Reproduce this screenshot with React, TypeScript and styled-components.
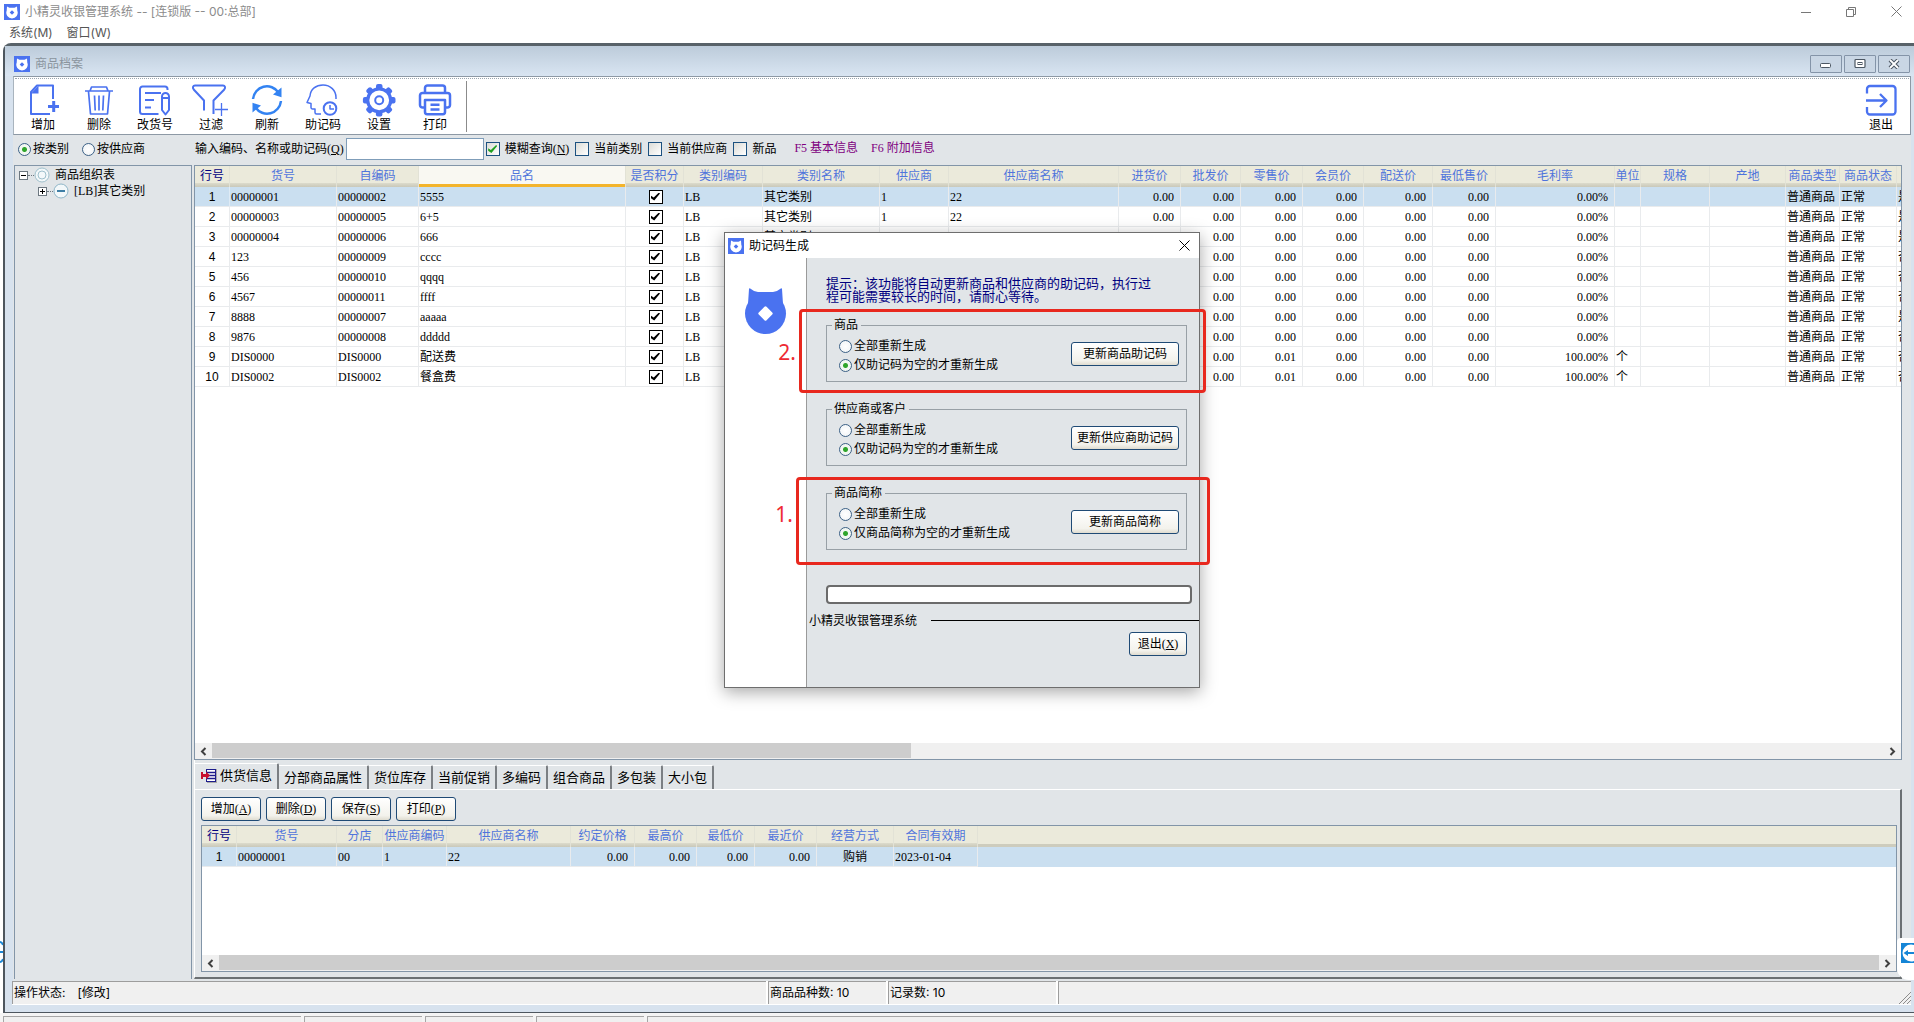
import React from "react";
import styled, { createGlobalStyle, css } from "styled-components";

const SONG = `"Liberation Serif", "Noto Sans CJK SC", serif`;
const HEI = `Inter, "Noto Sans CJK SC", sans-serif`;
const FACE = "#e1e5e8";
const FRAME = "#d7e2ee";
const LINE = "#8295a8";
const BLUE = "#4a72f0";

const GlobalStyle = createGlobalStyle`
  * { box-sizing: border-box; }
  body { margin: 0; background: #fff; overflow: hidden; }
  button, input { font: inherit; color: inherit; margin: 0; }
  button { padding: 0; border: 0; background: none; }
`;

/* ---------- application shell ---------- */

const Shell = styled.div`
  position: relative;
  display: flex;
  flex-direction: column;
  height: 100vh;
  font: 12px/16px ${SONG};
  color: #000;
  background: #fff;
  overflow: hidden;
`;

const AppBar = styled.header`
  display: flex;
  align-items: center;
  height: 23px;
  padding: 0 12px 0 4px;
  font-family: ${HEI};
  color: #8c8c8c;
`;

const AppTitle = styled.span`
  flex: 1;
  margin-left: 5px;
`;

const AppControls = styled.div`
  display: flex;
  gap: 35px;
  height: 20px;
`;

const GlyphButton = styled.button`
  display: flex;
  align-items: center;
  color: #777;
`;

const MenuBar = styled.nav`
  display: flex;
  gap: 14px;
  height: 20px;
  padding: 2px 9px;
  font-family: ${HEI};
  color: #555;
`;

const Mdi = styled.main`
  flex: 1;
  min-height: 0;
  display: flex;
  flex-direction: column;
  margin-left: 3px;
  border: solid #4d565e;
  border-width: 3px 0 1px 2px;
  border-top-color: #586269;
  border-top-left-radius: 8px;
  background: ${FRAME};
`;

const Caption = styled.div`
  display: flex;
  align-items: center;
  height: 30px;
  padding: 6px 4px 0 9px;
  background: linear-gradient(#bccbda, #d9e5f2);
  font-family: ${HEI};
  color: #8a949e;
`;

const CaptionButtons = styled.div`
  display: flex;
  gap: 2px;
`;

const CaptionButton = styled.button`
  display: flex;
  align-items: center;
  justify-content: center;
  width: 32px;
  height: 18px;
  border: 1px solid #8494a8;
  border-radius: 1px;
  background: #c9d6e4;
`;

const Face = styled.div`
  flex: 1;
  min-height: 0;
  display: flex;
  flex-direction: column;
  margin: 0 3px 0 8px;
  background: ${FACE};
`;

/* ---------- toolbar ---------- */

const Toolbar = styled.div`
  display: flex;
  border: 1px solid #8d99a5;
  border-left-color: #a9b4be;
  background: #fff;
  padding: 1px;
`;

const ToolbarInner = styled.div`
  flex: 1;
  display: flex;
  align-items: flex-start;
  border-top: 1px dotted #9aa5af;
  padding-top: 5px;
`;

const ToolButton = styled.button`
  display: flex;
  flex-direction: column;
  align-items: center;
  gap: 1px;
  width: 56px;
  height: 49px;
  line-height: 16px;

  svg {
    display: block;
    overflow: visible;
  }
`;

const ToolSeparator = styled.span`
  width: 1px;
  height: 51px;
  margin: -3px auto 0 3px;
  background: #8b8b8b;
`;

/* ---------- filter row ---------- */

const FilterRow = styled.div`
  display: flex;
  align-items: center;
  height: 30px;
  padding-bottom: 2px;
`;

const ScopeGroup = styled.div`
  display: flex;
  gap: 13px;
  width: 182px;
  padding-left: 5px;
`;

const Choice = styled.label`
  display: flex;
  align-items: center;
  gap: 2px;
  white-space: nowrap;
`;

const Radio = styled.input`
  appearance: none;
  width: 13px;
  height: 13px;
  border: 1px solid #3c6186;
  border-radius: 50%;
  background: radial-gradient(#fff, #eef2f5);

  &:checked {
    background: radial-gradient(circle, #2fa52b 0, #2fa52b 2px, #f2f7f2 3px);
  }
`;

const SearchBox = styled.input`
  width: 138px;
  height: 22px;
  padding: 0 2px;
  border: 1px solid #7f9db9;
  background: #fff;
`;

const CheckGroup = styled.div`
  display: flex;
  gap: 6px;
  margin: 0 18px 0 2px;
`;

const CheckChoice = styled.label`
  display: flex;
  align-items: center;
  gap: 5px;
  white-space: nowrap;
`;

const Tick = styled.input<{ $plain?: boolean }>`
  appearance: none;
  width: 14px;
  height: 14px;
  border: 1px solid ${(p) => (p.$plain ? "#000" : "#1c5180")};
  background: ${(p) => (p.$plain ? "#fff" : "linear-gradient(135deg, #dcdcd7, #fff)")};
  display: inline-grid;
  place-items: center;

  &:checked::before {
    content: "";
    width: 9px;
    height: 8px;
    background: ${(p) => (p.$plain ? "#000" : "#21a121")};
    clip-path: polygon(0 40%, 30% 62%, 88% 0, 100% 14%, 36% 100%, 0 72%);
  }
`;

const Hints = styled.div`
  display: flex;
  gap: 13px;
  padding-bottom: 2px;
  color: #800080;
`;

/* ---------- content ---------- */

const Content = styled.div`
  flex: 1;
  min-height: 0;
  display: flex;
  gap: 2px;
  padding: 0 9px 2px 1px;
`;

const Tree = styled.aside`
  width: 178px;
  border: 1px solid ${LINE};
  border-bottom: 0;
  padding: 1px 0 0 4px;
`;

const TreeRow = styled.div<{ $level: number }>`
  display: flex;
  align-items: center;
  height: 16px;
  padding-left: ${(p) => p.$level * 19}px;
`;

const TreeToggle = styled.button`
  width: 9px;
  height: 9px;
  border: 1px solid #6c7780;
  background: #fff;
  display: grid;
  place-items: center;

  svg {
    display: block;
  }
`;

const TreeDots = styled.span`
  width: 6px;
  border-top: 1px dotted #6c7780;
`;

const TreeLabel = styled.span`
  margin-left: 5px;
`;

const Right = styled.section`
  flex: 1;
  min-width: 0;
  display: flex;
  flex-direction: column;
`;

const GridBox = styled.div<{ $height?: number }>`
  ${(p) => (p.$height ? css`height: ${p.$height}px;` : css`flex: 1; min-height: 0;`)}
  display: flex;
  flex-direction: column;
  border: 1px solid ${LINE};
  background: #fff;
`;

const GridView = styled.div<{ $band?: boolean }>`
  flex: 1;
  min-height: 0;
  overflow: hidden;
  background: ${(p) =>
    p.$band
      ? "linear-gradient(#ebeadb 18px, #cdccbd 18px, #cdccbd 21px, #cadff0 21px, #cadff0 41px, #fff 41px)"
      : "#fff"};
`;

const Table = styled.table`
  table-layout: fixed;
  border-collapse: separate;
  border-spacing: 0;
`;

const Head = styled.th<{ $tone?: "dark" | "active" }>`
  height: 21px;
  padding: 1px 0 2px;
  border-right: 1px solid #e2e2d6;
  font-weight: 400;
  line-height: 16px;
  white-space: nowrap;
  overflow: hidden;
  color: ${(p) => (p.$tone === "dark" ? "#000080" : "#4f74dc")};
  background: ${(p) =>
    p.$tone === "active"
      ? "linear-gradient(#f9f8f2 18px, #f3b42c 18px)"
      : "linear-gradient(#ebeadb 17px, #dcdbcc 17px, #c9c8b9)"};
`;

const Cell = styled.td<{ $align?: string }>`
  height: 20px;
  padding: 0 ${(p) => (p.$align === "right" ? 6 : 1)}px 0 1px;
  border: solid #e9ebed;
  border-width: 0 1px 1px 0;
  text-align: ${(p) => p.$align || "left"};
  line-height: 16px;
  white-space: nowrap;
  overflow: hidden;
`;

const Row = styled.tr<{ $on?: boolean }>`
  background: ${(p) => (p.$on ? "#cadff0" : "#fff")};

  td:first-child {
    font-family: "Liberation Sans", sans-serif;
    text-align: center;
    border-right-color: ${(p) => (p.$on ? "#dfebf5" : "#e9ebed")};
  }
`;

const TickWrap = styled.span`
  display: flex;
  justify-content: center;
  padding-left: 2px;
`;

const Scroll = styled.div`
  display: flex;
  height: 16px;
  background: #f0f0f0;
`;

const ScrollArrow = styled.button`
  width: 17px;
  display: grid;
  place-items: center;
`;

const ScrollTrack = styled.div`
  flex: 1;
  height: 15px;
`;

const ScrollThumb = styled.div`
  height: 15px;
  background: #cdcdcd;
`;

/* ---------- lower tabs ---------- */

const TabBar = styled.div`
  display: flex;
  align-items: flex-end;
  height: 29px;
  padding-top: 3px;
  font-size: 13px;
  border-left: 1px solid #fff;
`;

const Tab = styled.button<{ $on?: boolean }>`
  display: flex;
  align-items: center;
  gap: 3px;
  height: ${(p) => (p.$on ? 26 : 24)}px;
  padding: 0 5px ${(p) => (p.$on ? 2 : 0)}px ${(p) => (p.$on ? 6 : 5)}px;
  border-top: 1px solid #fff;
  border-right: 2px solid #7b7f83;
  border-top-right-radius: 2px;
  white-space: nowrap;
`;

const Page = styled.div`
  border: solid #6b7073;
  border-width: 1px 2px 2px 1px;
  border-top-color: #fff;
  border-left-color: #fff;
  padding: 7px 3px 5px 6px;
`;

const Actions = styled.div`
  display: flex;
  gap: 5px;
  margin-bottom: 4px;
`;

const PushButton = styled.button<{ $width: number }>`
  width: ${(p) => p.$width}px;
  height: 24px;
  border: 1px solid #1f4a75;
  border-radius: 3px;
  background: linear-gradient(#fff, #f3f2ec 80%, #dfdcd0);
  line-height: 16px;
  white-space: nowrap;
`;

/* ---------- status bars ---------- */

const StatusBar = styled.footer`
  display: flex;
  gap: 2px;
  height: 24px;
  margin: 0 3px 7px 7px;
  background: #fff;
  font-family: ${HEI};
`;

const StatusPane = styled.div<{ $width?: number }>`
  ${(p) => (p.$width ? css`width: ${p.$width}px;` : css`flex: 1;`)}
  display: flex;
  gap: 12px;
  height: 23px;
  padding: 3px 1px;
  border: solid #9d9d9d;
  border-width: 1px 0 0 1px;
  background: #f0f0f0;
  white-space: nowrap;
`;

const GripPane = styled(StatusPane)`
  justify-content: flex-end;
  align-items: flex-end;
  padding: 0;
`;

const Strip = styled.div`
  display: flex;
  gap: 3px;
  height: 9px;
  padding: 3px 0 0 3px;
  background: #f4f4f4;
`;

const StripPane = styled.div<{ $width?: number }>`
  ${(p) => (p.$width ? css`width: ${p.$width}px;` : css`flex: 1;`)}
  border: solid #a6a6a6;
  border-width: 1px 0 0 1px;
  background: #f0f0f0;
`;

const Remote = styled.div`
  position: absolute;
  right: 0;
  bottom: 42px;
  width: 17px;
  height: 42px;
  padding: 5px 0 0 4px;
  overflow: hidden;
  background: #fff;
  border-radius: 4px 0 0 12px;
`;

const RemoteLeft = styled.div`
  position: absolute;
  left: 0;
  bottom: 58px;
  width: 3px;
  height: 24px;
  overflow: hidden;
  background: #fff;
`;

/* ---------- dialog ---------- */

const Dialog = styled.div`
  position: absolute;
  left: calc(50% - 233px);
  top: 232px;
  width: 476px;
  border: 1px solid #6e6e6e;
  background: #fff;
  box-shadow: 0 4px 16px rgba(0, 0, 0, 0.35);
`;

const DialogTitle = styled.div`
  display: flex;
  align-items: center;
  height: 25px;
  padding: 0 9px 0 3px;
  font-family: ${HEI};

  svg {
    display: block;
  }
`;

const TitleText = styled.span`
  flex: 1;
  margin-left: 5px;
`;

const DialogBody = styled.div`
  display: flex;
`;

const Side = styled.div`
  width: 82px;
  padding: 30px 0 0 20px;
  border-right: 1px solid #9a9a9a;
`;

const Form = styled.div`
  flex: 1;
  padding: 19px 0 31px;
  background: ${FACE};
`;

const Tip = styled.p`
  width: 330px;
  margin: 0 0 15px 19px;
  font-size: 13px;
  line-height: 13px;
  color: #000080;
`;

const Group = styled.fieldset`
  width: 361px;
  min-width: 0;
  height: 64px;
  margin: 0 0 20px 19px;
  padding: 0;
  border: 1px solid #98a0a6;
`;

const Legend = styled.legend`
  margin-left: 5px;
  padding: 0 3px 0 2px;
  line-height: 14px;
`;

const GroupBody = styled.div`
  display: flex;
  justify-content: space-between;
  align-items: flex-start;
  padding: 6px 7px 0 12px;
`;

const Choices = styled.div`
  display: grid;
  gap: 3px;
`;

const GroupAction = styled.div`
  padding-top: 4px;
`;

const Progress = styled.div`
  width: 366px;
  height: 19px;
  margin: 35px 0 9px 19px;
  border: 2px solid #6b6b6b;
  border-radius: 4px;
  background: #fff;
`;

const Brand = styled.div`
  display: flex;
  align-items: center;
  height: 15px;
  margin: 0 0 4px 2px;

  &::after {
    content: "";
    flex: 1;
    height: 1px;
    margin-left: 14px;
    background: #000;
  }
`;

const DialogFoot = styled.div`
  display: flex;
  justify-content: flex-end;
  padding-right: 12px;
`;

const Frame = styled.div<{ $left: number; $top: number; $width: number; $height: number }>`
  position: absolute;
  left: calc(50% + ${(p) => p.$left}px);
  top: ${(p) => p.$top}px;
  width: ${(p) => p.$width}px;
  height: ${(p) => p.$height}px;
  border: 3px solid #e8281e;
  border-radius: 4px;
  pointer-events: none;
`;

const Step = styled.span<{ $top: number }>`
  position: absolute;
  right: 100%;
  top: ${(p) => p.$top}px;
  margin-right: 6px;
  font: 21px/28px "Noto Sans", sans-serif;
  color: #ee2a33;
`;

/* ---------- drawings ---------- */

const AppIcon = () => (
  <svg width="16" height="16" viewBox="0 0 16 16">
    <rect width="16" height="16" fill={BLUE} />
    <path d="M3 2.500 5.500 3.800h5L13 2.500l.3 4.200a5.700 5.700 0 1 1-10.600 0z" fill="#fff" />
    <path d="m8 6.200 2.300 2.300L8 10.800 5.700 8.500z" fill={BLUE} />
  </svg>
);

const CatLogo = () => (
  <svg width="42" height="46" viewBox="0 0 42 46">
    <path d="M3 16 4 1q.2-1 1.200-.6Q9 3.600 13 4h15q4-.4 7.800-3.600Q37 0 37 1l1 15z" fill={BLUE} />
    <circle cx="20.500" cy="25.500" r="20.500" fill={BLUE} />
    <rect x="15" y="20" width="11" height="11" rx="1.500" fill="#fff" transform="rotate(45 20.500 25.500)" />
  </svg>
);

const Ico = ({ children, w = 2 }: { children: React.ReactNode; w?: number }) => (
  <svg width="36" height="32" viewBox="-1 0 36 32" fill="none" stroke={BLUE} strokeWidth={w} strokeLinejoin="round">
    {children}
  </svg>
);

const AddIcon = () => (
  <Ico>
    <path d="M27 15V1.500H11L5 8v22h19" />
    <path d="M5 9.500 12.500 1.500v8z" fill={BLUE} stroke="none" />
    <path d="M27.700 17v11M22 22.500h11" strokeWidth="3" />
  </Ico>
);
const TrashIcon = () => (
  <Ico w={1.700}>
    <path d="M3 7h28M8 7l1.500-4h15L26 7M6.500 7.500l2 22.500h17l2-22.500M12.500 11.500l.7 15M17 11.500v15M21.500 11.500l-.7 15" />
  </Ico>
);
const EditIcon = () => (
  <Ico>
    <path d="M29.500 6V5A2.500 2.500 0 0 0 27 2.500H4.500A2.500 2.500 0 0 0 2 5v22.500A2.500 2.500 0 0 0 4.500 30H20.500M7 9h16M7 16h9M7 23.500h6" />
    <path d="M24 12.500a3.500 3.500 0 0 1 7 0V26l-3.500 4.500L24 26zM24 14h7" />
  </Ico>
);
const FilterIcon = () => (
  <Ico>
    <path d="M10 26.500V16.500L-.3 5.500C-1.800 3.500-1 1.500 1 1.500h28c2 0 2.800 2 1.300 4L19.500 16.500V30" />
    <path d="M27.500 19v13M21 25.500h13" strokeWidth="1.300" />
  </Ico>
);
const RefreshIcon = () => (
  <svg width="36" height="32" viewBox="-1 0 36 32" fill="none" stroke="#3383f2" strokeWidth="2.500">
    <path d="M3 15A14 14 0 0 1 28.500 8.500M31 17A14 14 0 0 1 5.500 23.500" />
    <path d="M31.500 3.500v9.700l-8.500-2.700zM2.500 28.500v-9.700l8.500 2.700z" fill="#3383f2" stroke="none" />
  </svg>
);
const HeadIcon = () => (
  <Ico w={1.500}>
    <path d="M15 30h-4.500a1.500 1.500 0 0 1-1.500-1.500V25H6.500A1.500 1.500 0 0 1 5 23.500V19.500L1 18.500 4 12C4.500 5 10 1 17 1c7.500 0 13 5.500 13 12.500V15" />
    <circle cx="24" cy="24.500" r="6.300" strokeWidth="2" />
    <path d="M24 21v4h4" />
  </Ico>
);
const GearIcon = () => (
  <Ico>
    {[0, 45, 90, 135, 180, 225, 270, 315].map((a) => (
      <rect key={a} x="14" y="0" width="6.500" height="6" rx="2" fill={BLUE} stroke="none" transform={`rotate(${a} 17.200 16.300)`} />
    ))}
    <circle cx="17.200" cy="16.300" r="11.500" strokeWidth="3.200" fill="#fff" />
    <circle cx="17.200" cy="16.300" r="4" />
  </Ico>
);
const PrintIcon = () => (
  <Ico w={2.500}>
    <path d="M7 9V4a2.500 2.500 0 0 1 2.500-2.500h15A2.500 2.500 0 0 1 27 4v5M7 23.500H4.500A2.500 2.500 0 0 1 2 21V11.500A2.500 2.500 0 0 1 4.500 9h25a2.500 2.500 0 0 1 2.500 2.500V21a2.500 2.500 0 0 1-2.500 2.500H27" />
    <path d="M7 16h20v12a2.200 2.200 0 0 1-2.200 2.200H9.200A2.200 2.200 0 0 1 7 28zM12.500 20.700h9M12.500 25.500h9" />
  </Ico>
);
const ExitIcon = () => (
  <Ico w={2.300}>
    <path d="M3 9.500V5a3 3 0 0 1 3-3h22.500a3 3 0 0 1 3 3v22.500a3 3 0 0 1-3 3H6a3 3 0 0 1-3-3V23" />
    <path d="M2 16.500h20M16 10l6.500 6.500L16 23" />
  </Ico>
);

const Chevron = ({ back }: { back?: boolean }) => (
  <svg width="7" height="9" viewBox="0 0 7 9" fill="none" stroke="#404040" strokeWidth="2">
    <path d={back ? "M5.500 1 2 4.500 5.500 8" : "M1.500 1 5 4.500 1.500 8"} />
  </svg>
);

const TabIcon = () => (
  <svg width="16" height="14" viewBox="0 0 16 14">
    <rect x="6" y="0" width="10" height="14" fill="#a9a9a9" />
    <rect x="5.500" y=".5" width="9" height="12" fill="#fff" stroke="#1c1c8c" />
    <path d="M6 3.500h8M6 6.500h8M6 9.500h8" stroke="#1c1c8c" strokeWidth="1.500" />
    <path d="M0 3v7h2V8h3v2.500L9 6.500 5 2.500V5H2V3z" fill="#c8102e" />
  </svg>
);

/* ---------- data ---------- */

const tools: [string, () => React.ReactElement][] = [
  ["增加", AddIcon],
  ["删除", TrashIcon],
  ["改货号", EditIcon],
  ["过滤", FilterIcon],
  ["刷新", RefreshIcon],
  ["助记码", HeadIcon],
  ["设置", GearIcon],
  ["打印", PrintIcon],
];

type Col = { name: string; width: number; align?: string; tone?: "dark" | "active" };

const goodsCols: Col[] = [
  { name: "行号", width: 35, tone: "dark" },
  { name: "货号", width: 107 },
  { name: "自编码", width: 82 },
  { name: "品名", width: 207, tone: "active" },
  { name: "是否积分", width: 58, align: "center" },
  { name: "类别编码", width: 79 },
  { name: "类别名称", width: 117 },
  { name: "供应商", width: 69 },
  { name: "供应商名称", width: 170 },
  { name: "进货价", width: 62, align: "right" },
  { name: "批发价", width: 60, align: "right" },
  { name: "零售价", width: 62, align: "right" },
  { name: "会员价", width: 61, align: "right" },
  { name: "配送价", width: 69, align: "right" },
  { name: "最低售价", width: 63, align: "right" },
  { name: "毛利率", width: 119, align: "right" },
  { name: "单位", width: 26 },
  { name: "规格", width: 69 },
  { name: "产地", width: 76 },
  { name: "商品类型", width: 54 },
  { name: "商品状态", width: 57 },
  { name: "", width: 60 },
];

const goods: [string, string, string, string][] = [
  ["00000001", "00000002", "5555", "是"],
  ["00000003", "00000005", "6+5", "是"],
  ["00000004", "00000006", "666", "是"],
  ["123", "00000009", "cccc", "否"],
  ["456", "00000010", "qqqq", "否"],
  ["4567", "00000011", "ffff", "否"],
  ["8888", "00000007", "aaaaa", "是"],
  ["9876", "00000008", "ddddd", "否"],
  ["DIS0000", "DIS0000", "配送费", "否"],
  ["DIS0002", "DIS0002", "餐盒费", "否"],
];

const goodsRows = goods.map(([code, own, name, flag], i) => {
  const fee = i > 7;
  return [
    String(i + 1), code, own, name, "✓", "LB", "其它类别", "1", "22",
    "0.00", "0.00", fee ? "0.01" : "0.00", "0.00", "0.00", "0.00",
    fee ? "100.00%" : "0.00%", fee ? "个" : "", "", "", "普通商品", "正常", flag,
  ];
});

const supplyCols: Col[] = [
  { name: "行号", width: 35, tone: "dark" },
  { name: "货号", width: 100 },
  { name: "分店", width: 46 },
  { name: "供应商编码", width: 64 },
  { name: "供应商名称", width: 124 },
  { name: "约定价格", width: 64, align: "right" },
  { name: "最高价", width: 62, align: "right" },
  { name: "最低价", width: 58, align: "right" },
  { name: "最近价", width: 62, align: "right" },
  { name: "经营方式", width: 77, align: "center" },
  { name: "合同有效期", width: 84 },
];

const supplyRows = [["1", "00000001", "00", "1", "22", "0.00", "0.00", "0.00", "0.00", "购销", "2023-01-04"]];

const tabs = ["供货信息", "分部商品属性", "货位库存", "当前促销", "多编码", "组合商品", "多包装", "大小包"];

function DataTable({ cols, rows }: { cols: Col[]; rows: string[][] }) {
  const total = cols.reduce((sum, c) => sum + c.width, 0);
  return (
    <Table style={{ width: total }}>
      <colgroup>
        {cols.map((c, i) => (
          <col key={i} style={{ width: c.width }} />
        ))}
      </colgroup>
      <thead>
        <tr>
          {cols.map((c, i) => (
            <Head key={i} $tone={c.tone}>{c.name}</Head>
          ))}
        </tr>
      </thead>
      <tbody>
        {rows.map((row, r) => (
          <Row key={r} $on={r === 0}>
            {row.map((v, i) => (
              <Cell key={i} $align={cols[i].align}>
                {v === "✓" ? (
                  <TickWrap>
                    <Tick type="checkbox" $plain defaultChecked aria-label="是否积分" />
                  </TickWrap>
                ) : (
                  v
                )}
              </Cell>
            ))}
          </Row>
        ))}
      </tbody>
    </Table>
  );
}

function ScrollBar({ size }: { size: string }) {
  return (
    <Scroll>
      <ScrollArrow aria-label="向左滚动"><Chevron back /></ScrollArrow>
      <ScrollTrack>
        <ScrollThumb style={{ width: size }} />
      </ScrollTrack>
      <ScrollArrow aria-label="向右滚动"><Chevron /></ScrollArrow>
    </Scroll>
  );
}

function OptionGroup({ title, partial, action }: { title: string; partial: string; action: string }) {
  return (
    <Group>
      <Legend>{title}</Legend>
      <GroupBody>
        <Choices>
          <Choice><Radio type="radio" name={title} />全部重新生成</Choice>
          <Choice><Radio type="radio" name={title} defaultChecked />{partial}</Choice>
        </Choices>
        <GroupAction>
          <PushButton $width={108}>{action}</PushButton>
        </GroupAction>
      </GroupBody>
    </Group>
  );
}

export default function App() {
  return (
    <>
      <GlobalStyle />
      <Shell>
        <AppBar>
          <AppIcon />
          <AppTitle>小精灵收银管理系统 -- [连锁版 -- 00:总部]</AppTitle>
          <AppControls>
            <GlyphButton aria-label="最小化">
              <svg width="10" height="10" stroke="currentColor"><path d="M0 5.500h10" /></svg>
            </GlyphButton>
            <GlyphButton aria-label="还原">
              <svg width="10" height="10" fill="none" stroke="currentColor"><path d="M.5 2.500h7v7h-7zM2.500 2.500v-2h7v7h-2" /></svg>
            </GlyphButton>
            <GlyphButton aria-label="关闭">
              <svg width="11" height="11" stroke="currentColor"><path d="m.5.5 10 10m0-10-10 10" /></svg>
            </GlyphButton>
          </AppControls>
        </AppBar>
        <MenuBar>
          <span>系统(M)</span>
          <span>窗口(W)</span>
        </MenuBar>

        <Mdi>
          <Caption>
            <AppIcon />
            <TitleText>商品档案</TitleText>
            <CaptionButtons>
              <CaptionButton aria-label="最小化窗口">
                <svg width="12" height="12" fill="#fff" stroke="#4c5763"><rect x=".5" y="5.500" width="10" height="4" rx="1" /></svg>
              </CaptionButton>
              <CaptionButton aria-label="还原窗口">
                <svg width="12" height="10" fill="#fff" stroke="#4c5763"><rect x="1" y=".5" width="10" height="8" rx="1" strokeWidth="1.200" /><rect x="4" y="3.500" width="4" height="2" /></svg>
              </CaptionButton>
              <CaptionButton aria-label="关闭窗口">
                <svg width="12" height="10" viewBox="0 0 12 10"><path d="m2 1 8 8m0-8-8 8" stroke="#4c5763" strokeWidth="4" /><path d="m2 1 8 8m0-8-8 8" stroke="#fff" strokeWidth="1.800" /></svg>
              </CaptionButton>
            </CaptionButtons>
          </Caption>

          <Face>
            <Toolbar>
              <ToolbarInner>
                {tools.map(([name, Icon]) => (
                  <ToolButton key={name}><Icon />{name}</ToolButton>
                ))}
                <ToolSeparator />
                <ToolButton><ExitIcon />退出</ToolButton>
              </ToolbarInner>
            </Toolbar>

            <FilterRow>
              <ScopeGroup>
                <Choice><Radio type="radio" name="scope" defaultChecked />按类别</Choice>
                <Choice><Radio type="radio" name="scope" />按供应商</Choice>
              </ScopeGroup>
              <Choice>
                <span>输入编码、名称或助记码(<u>Q</u>)</span>
                <SearchBox type="text" />
              </Choice>
              <CheckGroup>
                <CheckChoice><Tick type="checkbox" defaultChecked /><span>模糊查询(<u>N</u>)</span></CheckChoice>
                <CheckChoice><Tick type="checkbox" />当前类别</CheckChoice>
                <CheckChoice><Tick type="checkbox" />当前供应商</CheckChoice>
                <CheckChoice><Tick type="checkbox" />新品</CheckChoice>
              </CheckGroup>
              <Hints>
                <span>F5 基本信息</span>
                <span>F6 附加信息</span>
              </Hints>
            </FilterRow>

            <Content>
              <Tree>
                <TreeRow $level={0}>
                  <TreeToggle aria-label="收起"><svg width="5" height="5" stroke="#000"><path d="M0 2.500h5" /></svg></TreeToggle>
                  <TreeDots />
                  <svg width="16" height="16" fill="none" stroke="#9fc0cc"><circle cx="8" cy="8" r="7" fill="#f3f8fa" /><circle cx="8" cy="8" r="4" /></svg>
                  <TreeLabel>商品组织表</TreeLabel>
                </TreeRow>
                <TreeRow $level={1}>
                  <TreeToggle aria-label="展开"><svg width="5" height="5" stroke="#000"><path d="M0 2.500h5M2.500 0v5" /></svg></TreeToggle>
                  <TreeDots />
                  <svg width="16" height="16" fill="none" stroke="#8fb6c8"><circle cx="8" cy="8" r="7" fill="#f3f8fa" /><path d="M4 8h8" stroke="#3f7fa6" strokeWidth="2" /></svg>
                  <TreeLabel>[LB]其它类别</TreeLabel>
                </TreeRow>
              </Tree>

              <Right>
                <GridBox>
                  <GridView><DataTable cols={goodsCols} rows={goodsRows} /></GridView>
                  <ScrollBar size="41.800%" />
                </GridBox>

                <TabBar>
                  {tabs.map((t, i) => (
                    <Tab key={t} $on={i === 0}>{i === 0 && <TabIcon />}{t}</Tab>
                  ))}
                </TabBar>
                <Page>
                  <Actions>
                    <PushButton $width={60}>增加(<u>A</u>)</PushButton>
                    <PushButton $width={60}>删除(<u>D</u>)</PushButton>
                    <PushButton $width={60}>保存(<u>S</u>)</PushButton>
                    <PushButton $width={60}>打印(<u>P</u>)</PushButton>
                  </Actions>
                  <GridBox $height={147}>
                    <GridView $band><DataTable cols={supplyCols} rows={supplyRows} /></GridView>
                    <ScrollBar size="100%" />
                  </GridBox>
                </Page>
              </Right>
            </Content>
          </Face>

          <StatusBar>
            <StatusPane $width={754}><span>操作状态:</span><span>[修改]</span></StatusPane>
            <StatusPane $width={118}>商品品种数: 10</StatusPane>
            <StatusPane $width={168}>记录数: 10</StatusPane>
            <GripPane>
              <svg width="13" height="13" stroke="#8c8c8c"><path d="M1 13 13 1M5 13l8-8M9 13l4-4" /></svg>
            </GripPane>
          </StatusBar>
        </Mdi>

        <Strip>
          <StripPane $width={298} />
          <StripPane $width={118} />
          <StripPane $width={108} />
          <StripPane $width={108} />
          <StripPane />
        </Strip>

        <RemoteLeft>
          <svg width="3" height="24" viewBox="0 0 3 24" fill="none" stroke="#1b87d6" strokeWidth="2"><path d="M0 2q2 0 3 3M0 12h3M0 22q2 0 3-3" /></svg>
        </RemoteLeft>
        <Remote>
          <svg width="20" height="20" viewBox="0 0 20 20">
            <rect width="20" height="20" fill="#1585d6" />
            <circle cx="10" cy="10" r="8.500" fill="#fff" />
            <path d="m2.500 10 4.500-3v2h6V7l4.500 3-4.500 3v-2H7v2z" fill="#1585d6" />
          </svg>
        </Remote>

        <Dialog role="dialog" aria-label="助记码生成">
          <DialogTitle>
            <AppIcon />
            <TitleText>助记码生成</TitleText>
            <button aria-label="关闭对话框">
              <svg width="11" height="11" stroke="#000"><path d="m.5.5 10 10m0-10-10 10" /></svg>
            </button>
          </DialogTitle>
          <DialogBody>
            <Side><CatLogo /></Side>
            <Form>
              <Tip>提示：该功能将自动更新商品和供应商的助记码，执行过程可能需要较长的时间，请耐心等待。</Tip>
              <OptionGroup title="商品" partial="仅助记码为空的才重新生成" action="更新商品助记码" />
              <OptionGroup title="供应商或客户" partial="仅助记码为空的才重新生成" action="更新供应商助记码" />
              <OptionGroup title="商品简称" partial="仅商品简称为空的才重新生成" action="更新商品简称" />
              <Progress role="progressbar" aria-label="更新进度" />
              <Brand>小精灵收银管理系统</Brand>
              <DialogFoot><PushButton $width={58}>退出(<u>X</u>)</PushButton></DialogFoot>
            </Form>
          </DialogBody>
        </Dialog>

        <Frame $left={-158} $top={309} $width={407} $height={84}><Step $top={26}>2.</Step></Frame>
        <Frame $left={-161} $top={477} $width={414} $height={88}><Step $top={20}>1.</Step></Frame>
      </Shell>
    </>
  );
}
